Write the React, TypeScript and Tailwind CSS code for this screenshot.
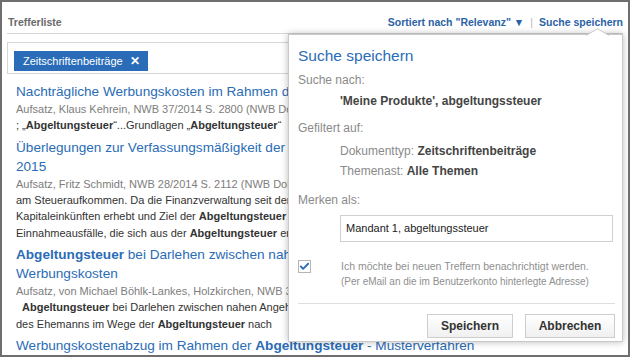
import { Check } from "lucide-react";

const blue = "text-[#2a6cb6]";

function Result({
  title,
  meta,
  lines,
}: {
  title: React.ReactNode;
  meta: string;
  lines: React.ReactNode[];
}) {
  return (
    <div className="mb-[4px]">
      <div className={`text-[13.6px] leading-[19px] whitespace-nowrap ${blue}`}>{title}</div>
      <div className="text-[11px] leading-[16px] text-[#7d7d7d] whitespace-nowrap">{meta}</div>
      {lines.map((l, i) => (
        <div key={i} className="text-[11px] leading-[16.5px] text-[#333] whitespace-nowrap">
          {l}
        </div>
      ))}
    </div>
  );
}

export default function App() {
  return (
    <div className="relative w-[630px] h-[357px] overflow-hidden bg-white border-2 border-[#6e6e6e] font-['Liberation_Sans',Arial,sans-serif]">
      <div className="px-[5px]">
        {/* Kopfzeile */}
        <div className="h-[32px] flex items-end justify-between pb-[4px] border-b border-[#d4d4d4]">
          <span className="pl-px text-[10.5px] leading-[14px] font-bold text-[#6a6a6a]">Trefferliste</span>
          <div className="flex items-center text-[10.5px] leading-[14px] font-bold text-[#2b62a6]">
            <span>Sortiert nach "Relevanz" ▼</span>
            <span className="mx-[6px] font-normal text-[#b8b8b8]">|</span>
            <span>Suche speichern</span>
          </div>
        </div>

        {/* Filter */}
        <div className="mt-[8px] h-[32px] w-[560px] border border-[#d6d6d6] pl-[6px] pt-[5px]">
          <span className="inline-flex items-center h-[20px] pl-[9px] pr-[8px] bg-[#2a6cb8] text-white text-[11px]">
            Zeitschriftenbeiträge
            <span className="ml-[7px] font-bold text-[12px]">✕</span>
          </span>
        </div>

        {/* Treffer */}
        <div className="mt-[8px] pl-[9px]">
          <Result
            title="Nachträgliche Werbungskosten im Rahmen der Abgeltungsteuer"
            meta="Aufsatz, Klaus Kehrein, NWB 37/2014 S. 2800 (NWB DokID: ABCDE-12345)"
            lines={[
              <>
                ; „<b>Abgeltungsteuer</b>“...Grundlagen „<b>Abgeltungsteuer</b>“
              </>,
            ]}
          />
          <Result
            title={
              <>
                Überlegungen zur Verfassungsmäßigkeit der Abgeltungsteuer ab
                <br />
                2015
              </>
            }
            meta="Aufsatz, Fritz Schmidt, NWB 28/2014 S. 2112 (NWB DokID: QAAAE-70612)"
            lines={[
              "am Steueraufkommen. Da die Finanzverwaltung seit der Unternehmensteuerreform",
              <>
                Kapitaleinkünften erhebt und Ziel der <b>Abgeltungsteuer</b> ja gerade war
              </>,
              <>
                Einnahmeausfälle, die sich aus der <b>Abgeltungsteuer</b> ergeben
              </>,
            ]}
          />
          <Result
            title={
              <>
                <b>Abgeltungsteuer</b> bei Darlehen zwischen nahen Angehörigen und
                <br />
                Werbungskosten
              </>
            }
            meta="Aufsatz, von Michael Böhlk-Lankes, Holzkirchen, NWB 36/2014 S. 2700"
            lines={[
              <span className="pl-[6px]">
                <b>Abgeltungsteuer</b> bei Darlehen zwischen nahen Angehörigen
              </span>,
              <>
                des Ehemanns im Wege der <b>Abgeltungsteuer</b> nach
              </>,
            ]}
          />
          <div className={`text-[13.6px] leading-[19px] whitespace-nowrap ${blue}`}>
            Werbungskostenabzug im Rahmen der <b>Abgeltungsteuer</b> - Musterverfahren
          </div>
        </div>
      </div>

      {/* Popup: Suche speichern */}
      <div className="absolute left-[286px] top-[32px] w-[335px] h-[308px] bg-white border border-[#c9c9c9] shadow-[0_0_7px_rgba(0,0,0,0.28)] pl-[9px] pr-[7px] pt-[11px]">
        <svg className="absolute left-[297px] top-[-7px]" width="23" height="8" viewBox="0 0 23 8">
          <polygon points="0,7.5 11.5,0.8 23,7.5" fill="white" />
          <polyline points="0,7.5 11.5,0.8 23,7.5" fill="none" stroke="#c9c9c9" strokeWidth="1" />
        </svg>

        <div className="text-[15.5px] leading-[20px] text-[#2a6cb6]">Suche speichern</div>
        <div className="mt-[4px] text-[12px] leading-[20px] text-[#8a8a8a]">Suche nach:</div>
        <div className="mt-[1px] ml-[42px] text-[12px] leading-[20px] font-bold text-[#444]">
          'Meine Produkte', abgeltungssteuer
        </div>
        <div className="mt-[7px] text-[12px] leading-[20px] text-[#8a8a8a]">Gefiltert auf:</div>
        <div className="mt-[3px] ml-[42px] text-[12px] leading-[20px] text-[#8a8a8a]">
          Dokumenttyp: <span className="font-bold text-[#444]">Zeitschriftenbeiträge</span>
        </div>
        <div className="ml-[42px] text-[12px] leading-[20px] text-[#8a8a8a]">
          Themenast: <span className="font-bold text-[#444]">Alle Themen</span>
        </div>
        <div className="mt-[9px] text-[12px] leading-[20px] text-[#8a8a8a]">Merken als:</div>
        <div className="mt-[5px] ml-[42px] w-[273px] h-[27px] border border-[#cfcfcf] flex items-center pl-[5px] text-[11px] text-[#222]">
          Mandant 1, abgeltungssteuer
        </div>

        <div className="mt-[16px] flex">
          <div className="mt-[2px] w-[13px] h-[13px] border border-[#b5b5b5] bg-white flex items-center justify-center">
            <Check size={11} strokeWidth={4} className="text-[#2a6cb6]" />
          </div>
          <div className="ml-[30px] text-[#8f8f8f]">
            <div className="text-[10.5px] leading-[16px]">Ich möchte bei neuen Treffern benachrichtigt werden.</div>
            <div className="text-[10px] leading-[16px]">(Per eMail an die im Benutzerkonto hinterlegte Adresse)</div>
          </div>
        </div>

        <div className="mt-[13px] border-t border-[#dedede]" />

        <div className="mt-[10px] flex justify-end gap-[12px]">
          <button className="w-[86px] h-[24px] border border-[#cdcdcd] bg-gradient-to-b from-white to-[#f0f0f0] text-[12px] font-bold text-[#333]">
            Speichern
          </button>
          <button className="w-[90px] h-[24px] border border-[#cdcdcd] bg-gradient-to-b from-white to-[#f0f0f0] text-[12px] font-bold text-[#333]">
            Abbrechen
          </button>
        </div>
      </div>
    </div>
  );
}
